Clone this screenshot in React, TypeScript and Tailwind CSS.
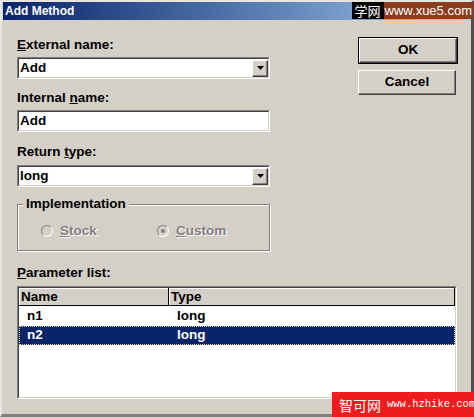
const font = { fontFamily: '"Liberation Sans", Arial, sans-serif' }

function DropArrow() {
  return (
    <div className="flex h-[17px] w-[16px] items-center justify-center border border-t-white border-l-white border-r-[#404040] border-b-[#404040] bg-[#d4d0c8] shadow-[inset_-1px_-1px_0_#808080]">
      <svg width="7" height="4" viewBox="0 0 7 4">
        <path d="M0 0h7L3.5 4z" fill="#000" />
      </svg>
    </div>
  )
}

function Field({ value, combo }: { value: string; combo?: boolean }) {
  return (
    <div className="flex h-[22px] w-[253px] items-center border border-t-[#808080] border-l-[#808080] border-r-white border-b-white">
      <div className="flex h-full flex-1 items-center justify-between border border-t-[#404040] border-l-[#404040] border-r-[#d4d0c8] border-b-[#d4d0c8] bg-white pl-[1px] pr-0">
        <span className="text-[13.5px] font-bold leading-none text-black">{value}</span>
        {combo && <DropArrow />}
      </div>
    </div>
  )
}

function Radio({ label, checked, u }: { label: string; checked?: boolean; u: string }) {
  return (
    <div className="flex items-center gap-[7px]">
      <div className="relative h-[12px] w-[12px] rounded-full border border-t-[#808080] border-l-[#808080] border-r-white border-b-white bg-[#d4d0c8]">
        {checked && <div className="absolute left-[3px] top-[3px] h-[4px] w-[4px] rounded-full bg-[#808080]" />}
      </div>
      <span className="text-[13.5px] font-bold text-[#808080] [text-shadow:1px_1px_0_#ffffff]">
        <span className="underline">{u}</span>
        {label}
      </span>
    </div>
  )
}

function Button({ label, def }: { label: string; def?: boolean }) {
  return (
    <div className={def ? 'border border-black' : ''}>
      <div className="flex h-[25px] w-[98px] items-center justify-center border border-t-white border-l-white border-r-[#404040] border-b-[#404040] bg-[#d4d0c8] shadow-[inset_-1px_-1px_0_#808080]">
        <span className="text-[13.5px] font-bold text-black">{label}</span>
      </div>
    </div>
  )
}

export default function App() {
  return (
    <div className="relative h-[417px] w-[474px] overflow-hidden bg-[#d4d0c8]" style={font}>
      <div className="flex h-full flex-col border-l-2 border-t-2 border-r-[3px] border-b-[3px] border-l-[#e8e6e0] border-t-[#e8e6e0] border-r-[#505050] border-b-[#808080] pl-[1px]">
        {/* Title bar */}
        <div className="flex h-[18px] items-center bg-gradient-to-r from-[#0a246a] to-[#a6caf0] pl-[2px]">
          <span className="text-[12px] font-bold text-white">Add Method</span>
        </div>

        <div className="flex flex-col pl-[14px] pr-[13px] pt-[17px]">
          <div className="flex justify-between">
            {/* Left column */}
            <div className="flex w-[253px] flex-col">
              <div className="h-[16px] text-[13.5px] font-bold leading-[16px] text-black">
                <span className="underline">E</span>xternal name:
              </div>
              <div className="mt-[4px]">
                <Field value="Add" combo />
              </div>
              <div className="mt-[11px] h-[16px] text-[13.5px] font-bold leading-[16px] text-black">
                Internal <span className="underline">n</span>ame:
              </div>
              <div className="mt-[4px]">
                <Field value="Add" />
              </div>
              <div className="mt-[12px] h-[16px] text-[13.5px] font-bold leading-[16px] text-black">
                Return <span className="underline">t</span>ype:
              </div>
              <div className="mt-[5px]">
                <Field value="long" combo />
              </div>

              {/* Group box */}
              <div className="relative mt-[17px] h-[47px] w-[253px] border border-[#808080] shadow-[inset_1px_1px_0_#ffffff,1px_1px_0_#ffffff]">
                <span className="absolute -top-[9px] left-[5px] bg-[#d4d0c8] px-[3px] text-[13.5px] font-bold leading-[16px] text-black">
                  Implementation
                </span>
                <div className="flex h-full items-center pl-[23px] pt-[7px]">
                  <div className="w-[116px]">
                    <Radio u="S" label="tock" />
                  </div>
                  <Radio u="C" label="ustom" checked />
                </div>
              </div>
            </div>

            {/* Buttons */}
            <div className="flex flex-col gap-[6px]">
              <Button label="OK" def />
              <Button label="Cancel" />
            </div>
          </div>

          <div className="mt-[14px] h-[16px] text-[13.5px] font-bold leading-[16px] text-black">
            <span className="underline">P</span>arameter list:
          </div>

          {/* List view */}
          <div className="mt-[5px] h-[113px] w-[440px] border border-t-[#808080] border-l-[#808080] border-r-white border-b-white">
            <div className="h-full border border-t-[#404040] border-l-[#404040] border-r-[#d4d0c8] border-b-[#d4d0c8] bg-white">
              <div className="flex h-[18px] border-b border-black bg-[#d4d0c8] text-[13.5px] font-bold leading-[17px] text-black">
                <div className="w-[150px] border-r border-black pl-[2px] shadow-[inset_1px_1px_0_#ffffff]">Name</div>
                <div className="flex-1 border-r border-black pl-[2px] shadow-[inset_1px_1px_0_#ffffff]">Type</div>
              </div>
              <div className="flex h-[20px] items-center text-[13.5px] font-bold text-black">
                <div className="w-[156px] pl-[8px]">n1</div>
                <div className="pl-[2px]">long</div>
              </div>
              <div className="flex h-[19px] items-center bg-[#0a246a] text-[13.5px] font-bold text-white outline-1 -outline-offset-1 outline-dotted outline-[#d8d8a8]">
                <div className="w-[156px] pl-[8px]">n2</div>
                <div className="pl-[2px]">long</div>
              </div>
            </div>
          </div>
        </div>
      </div>

      {/* Watermarks */}
      <div className="absolute right-[1px] top-[2px] flex h-[17px] items-center whitespace-nowrap text-[13px] leading-none">
        <span className="flex h-full items-center bg-black px-[3px] text-white" style={{ fontFamily: '"Noto Sans CJK SC", sans-serif' }}>学网</span>
        <span className="flex h-full items-center bg-[#8a3c1c] px-[1px] text-white" style={{ fontFamily: '"Liberation Sans", Arial, sans-serif' }}>www.xue5.com</span>
      </div>
      <div className="absolute bottom-0 right-0 flex h-[25px] w-[142px] items-center gap-[6px] whitespace-nowrap bg-[#ee1c1c] pl-[7px] text-white">
        <span className="shrink-0 text-[14px] leading-none" style={{ fontFamily: '"Noto Sans CJK SC", sans-serif' }}>智可网</span>
        <span className="shrink-0 text-[10.5px] leading-none" style={{ fontFamily: '"Liberation Mono", monospace' }}>www.hzhike.com</span>
      </div>
    </div>
  )
}
